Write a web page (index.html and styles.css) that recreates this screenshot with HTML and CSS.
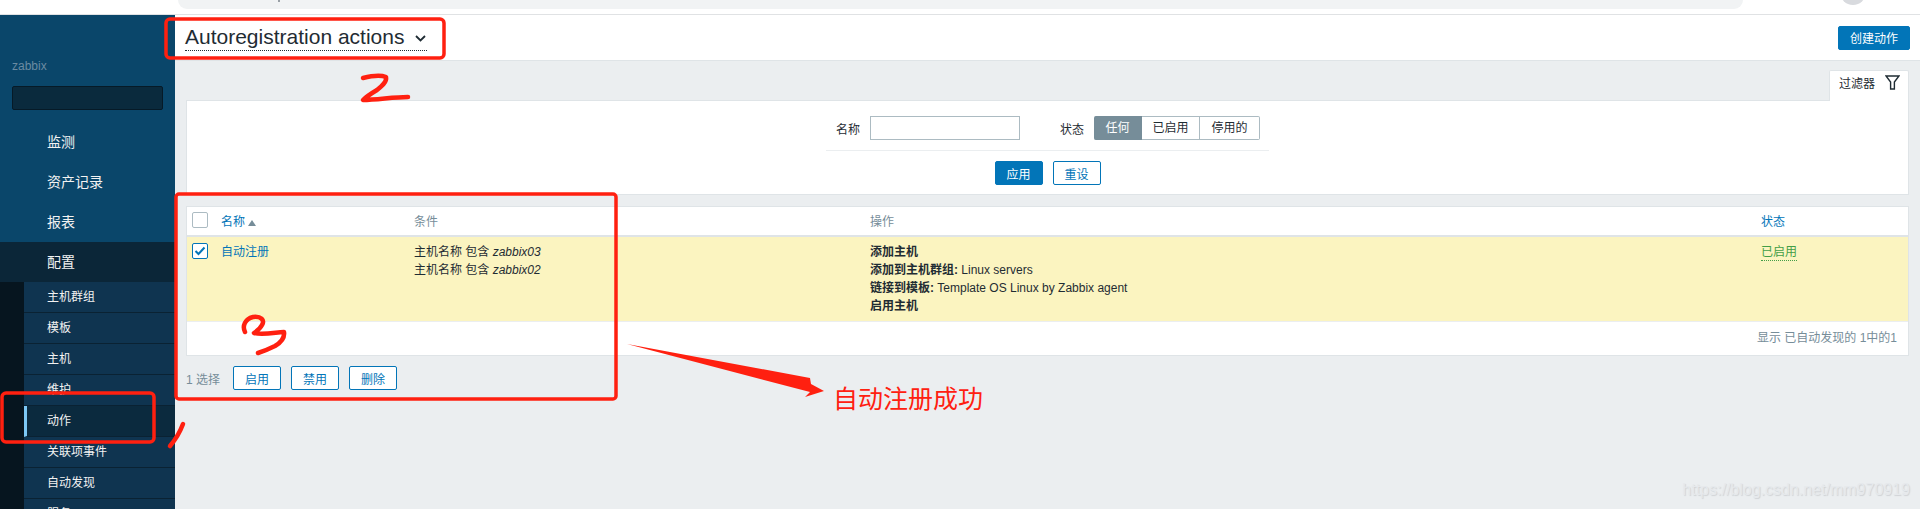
FILE: index.html
```html
<!DOCTYPE html>
<html lang="zh-CN">
  <head>
    <meta charset="UTF-8" />
    <meta name="viewport" content="width=device-width, initial-scale=1.0" />
    <title>Autoregistration actions</title>
    <link rel="stylesheet" href="styles.css">
  </head>
  <body>
    <div class="browser-strip">
      <div class="address-bar"><span class="address-tick"></span></div>
      <div class="avatar"></div>
    </div>

    <div class="app">
      <aside class="sidebar">
        <div class="server-name">zabbix</div>
        <div class="search-box"></div>
        <ul class="menu">
          <li>监测</li>
          <li>资产记录</li>
          <li>报表</li>
          <li class="open">配置</li>
        </ul>
        <ul class="submenu">
          <li>主机群组</li>
          <li>模板</li>
          <li>主机</li>
          <li>维护</li>
          <li class="current">动作</li>
          <li>关联项事件</li>
          <li>自动发现</li>
          <li>服务</li>
        </ul>
      </aside>

      <main class="main">
        <header class="page-head">
          <h1 class="page-title">Autoregistration actions
            <svg class="chevron" width="11" height="7" viewBox="0 0 11 7"><path d="M1 1l4.5 4.5L10 1" fill="none" stroke="#1f2c33" stroke-width="1.8"/></svg>
          </h1>
          <button class="btn btn-solid create-btn">创建动作</button>
        </header>

        <div class="content">
          <div class="filter-tabs">
            <div class="filter-tab">
              <span>过滤器</span>
              <svg width="15" height="15" viewBox="0 0 15 15"><path d="M1 1h13L9.4 7v7H5.6V7z" fill="none" stroke="#1f2c33" stroke-width="1.4"/></svg>
            </div>
          </div>
          <section class="filter">
            <div class="filter-row">
              <label class="filter-label">名称</label>
              <input class="filter-input" type="text" />
              <label class="filter-label status-label">状态</label>
              <div class="segments">
                <span class="segment segment-on">任何</span>
                <span class="segment segment-mid">已启用</span>
                <span class="segment segment-end">停用的</span>
              </div>
            </div>
            <div class="filter-actions">
              <button class="btn btn-solid">应用</button>
              <button class="btn">重设</button>
            </div>
          </section>

          <section class="list">
            <table class="actions-table">
              <colgroup>
                <col class="col-check" />
                <col class="col-name" />
                <col class="col-cond" />
                <col class="col-ops" />
                <col />
              </colgroup>
              <thead>
                <tr>
                  <th><span class="checkbox"></span></th>
                  <th class="sortable">名称<span class="sort-up"></span></th>
                  <th>条件</th>
                  <th>操作</th>
                  <th class="sortable">状态</th>
                </tr>
              </thead>
              <tbody>
                <tr class="selected">
                  <td>
                    <span class="checkbox checked">
                      <svg width="12" height="10" viewBox="0 0 12 10"><path d="M1.5 5l3 3 6-6.5" fill="none" stroke="#0275b8" stroke-width="2"/></svg>
                    </span>
                  </td>
                  <td><a class="link">自动注册</a></td>
                  <td>
                    主机名称 包含 <i>zabbix03</i><br />
                    主机名称 包含 <i>zabbix02</i>
                  </td>
                  <td>
                    <b>添加主机</b><br />
                    <b>添加到主机群组:</b> Linux servers<br />
                    <b>链接到模板:</b> Template OS Linux by Zabbix agent<br />
                    <b>启用主机</b>
                  </td>
                  <td><span class="enabled">已启用</span></td>
                </tr>
              </tbody>
            </table>
            <div class="list-foot">显示 已自动发现的 1中的1</div>
          </section>

          <div class="bulk-bar">
            <span class="bulk-count">1 选择</span>
            <button class="btn">启用</button>
            <button class="btn">禁用</button>
            <button class="btn">删除</button>
          </div>
        </div>
      </main>
    </div>

    <!-- red pen notes drawn on top of the page -->
    <svg class="notes" width="1920" height="509" viewBox="0 0 1920 509">
      <g fill="none" stroke="#ff2010" stroke-width="3.5" stroke-linecap="round" stroke-linejoin="round">
        <rect x="166" y="19" width="278" height="39" rx="4" />
        <rect x="176" y="194" width="440" height="205" rx="3" />
        <rect x="2" y="393" width="152" height="49" rx="4" />
        <g stroke-width="4.5">
          <path d="M363 78c8-2 18-3 23-1 1 5-4 9-9 13-5 3-10 6-14 10 14 0 30-3 45-3" />
          <path d="M245 332c-3-6 0-13 8-15 8-1 12 3 9 8-2 4-5 6-8 8 8 2 18 0 30-1 1 7-4 11-9 14-6 3-11 5-17 7" />
          <path d="M183 424c-3 8-7 15-13 22" />
        </g>
      </g>
      <polygon points="627,344 810,378 811,384 824,391 805,397 810,392" fill="#ff2010" />
    </svg>
    <div class="note-text">自动注册成功</div>
    <div class="watermark">https://blog.csdn.net/mm970919</div>
  </body>
</html>
```

FILE: styles.css
```css
html,
body {
  height: 100%;
  margin: 0;
  overflow: hidden;
}
body {
  display: flex;
  flex-direction: column;
  position: relative;
  font-family: "Liberation Sans", "Noto Sans CJK SC", sans-serif;
  font-size: 12px;
  color: #1f2c33;
  background-color: #ebeef0;
}
ul {
  list-style: none;
  margin: 0;
  padding: 0;
}

.browser-strip {
  display: flex;
  flex: none;
  height: 14px;
  background-color: #fff;
  border-bottom: 1px solid #e0e2e4;
}
.address-bar {
  width: 1565px;
  height: 9px;
  margin-left: 178px;
  background-color: #f1f3f4;
  border-radius: 0 0 14px 14px;
}
.address-tick {
  display: block;
  width: 2px;
  height: 2px;
  margin-left: 100px;
  background-color: #9aa0a6;
}
.avatar {
  width: 26px;
  height: 26px;
  margin: -21px 0 0 97px;
  border-radius: 50%;
  background-color: #d8dade;
}

.app {
  display: flex;
  flex: 1;
  min-height: 0;
}

.sidebar {
  flex: none;
  width: 175px;
  overflow: hidden;
  background-color: #0a466a;
  color: #f2f2f2;
}
.server-name {
  padding: 44px 0 0 12px;
  line-height: 14px;
  color: #6a8ba2;
}
.search-box {
  height: 22px;
  margin: 13px 12px 12px;
  background-color: #0a2a3d;
  border: 1px solid #061a27;
  border-radius: 2px;
}
.menu li {
  height: 40px;
  padding-left: 47px;
  font-size: 14px;
  line-height: 40px;
}
.menu .open {
  background-color: #0b2638;
}
.submenu {
  background-color: #06151f;
  padding-left: 24px;
}
.submenu li {
  height: 30px;
  padding-left: 23px;
  line-height: 30px;
  background-color: #0f3450;
  border-bottom: 1px solid #0a2233;
}
.submenu .current {
  padding-left: 20px;
  background-color: #0b2a3e;
  border-left: 3px solid #7cc8f5;
}

.main {
  display: flex;
  flex: 1;
  flex-direction: column;
  min-width: 0;
}
.page-head {
  display: flex;
  flex: none;
  align-items: center;
  justify-content: space-between;
  height: 45px;
  padding: 0 10px;
  background-color: #fff;
  border-bottom: 1px solid #dfe4e7;
}
.page-title {
  margin: 0;
  padding-bottom: 1px;
  font-size: 21px;
  font-weight: normal;
  line-height: 24px;
  border-bottom: 1px dotted #1f2c33;
}
.chevron {
  margin: 0 1px 2px 5px;
}
.content {
  padding: 9px 11px 0 11px;
}

.btn {
  width: 48px;
  height: 24px;
  padding: 0;
  font-family: inherit;
  font-size: 12px;
  color: #0275b8;
  background-color: #fff;
  border: 1px solid #0275b8;
  border-radius: 2px;
}
.btn-solid {
  color: #fff;
  background-color: #0275b8;
}
.create-btn {
  width: 72px;
}

.filter-tabs {
  display: flex;
  justify-content: flex-end;
}
.filter-tab {
  display: flex;
  align-items: center;
  gap: 10px;
  width: 80px;
  height: 31px;
  box-sizing: border-box;
  padding: 0 8px 7px 9px;
  margin-bottom: -1px;
  white-space: nowrap;
  background-color: #fff;
  border: 1px solid #dfe4e7;
  border-bottom: 0;
  border-radius: 2px 2px 0 0;
  position: relative;
}
.filter {
  height: 95px;
  box-sizing: border-box;
  background-color: #fff;
  border: 1px solid #dfe4e7;
  margin-bottom: 11px;
}
.filter-row {
  display: flex;
  align-items: center;
  width: 443px;
  height: 35px;
  margin: 15px auto 0;
  padding-bottom: 10px;
  box-sizing: border-box;
  border-bottom: 1px solid #ebeef0;
}
.filter-label {
  margin-left: 10px;
  margin-right: 10px;
}
.status-label {
  margin-left: 40px;
}
.filter-input {
  width: 150px;
  height: 24px;
  box-sizing: border-box;
  background-color: #fff;
  border: 1px solid #acbbc2;
  padding: 0;
}
.segments {
  display: flex;
  height: 24px;
}
.segment {
  box-sizing: border-box;
  width: 60px;
  line-height: 22px;
  text-align: center;
  border: 1px solid #acbbc2;
  border-left: 0;
}
.segment-on {
  width: 48px;
  color: #fff;
  background-color: #768d99;
  border-color: #768d99;
  border-radius: 2px 0 0 2px;
}
.segment-mid {
  width: 58px;
}
.segment-end {
  border-radius: 0 2px 2px 0;
}
.filter-actions {
  display: flex;
  justify-content: center;
  gap: 10px;
  margin-top: 10px;
}

.list {
  background-color: #fff;
  border: 1px solid #dfe4e7;
}
.actions-table {
  width: 100%;
  table-layout: fixed;
  border-collapse: collapse;
}
.col-check {
  width: 29px;
}
.col-name {
  width: 193px;
}
.col-cond {
  width: 456px;
}
.col-ops {
  width: 891px;
}
.actions-table th {
  height: 26px;
  padding: 0 5px 2px;
  font-weight: normal;
  text-align: left;
  color: #768d99;
  border-bottom: 2px solid #dfe4e7;
}
.actions-table .sortable {
  color: #0275b8;
}
.actions-table td {
  height: 73px;
  padding: 6px 5px 5px;
  line-height: 18px;
  vertical-align: top;
  background-color: #fbf4c0;
  border-bottom: 1px solid #ebeef0;
}
.sort-up {
  display: inline-block;
  margin-left: 3px;
  border: 4px solid transparent;
  border-top: 0;
  border-bottom: 6px solid #768d99;
}
.checkbox {
  display: flex;
  align-items: center;
  justify-content: center;
  width: 16px;
  height: 16px;
  box-sizing: border-box;
  background-color: #fff;
  border: 1px solid #acbbc2;
  border-radius: 2px;
}
.checked {
  border-color: #0275b8;
}
.link {
  color: #0275b8;
}
.enabled {
  display: inline-block;
  line-height: 15px;
  color: #429e47;
  border-bottom: 1px dotted #429e47;
}
.list-foot {
  height: 33px;
  padding-right: 11px;
  line-height: 33px;
  text-align: right;
  color: #768d99;
}
.bulk-bar {
  display: flex;
  align-items: center;
  gap: 10px;
  margin-top: 10px;
}
.bulk-count {
  width: 37px;
  color: #768d99;
}

.notes {
  position: absolute;
  top: 0;
  left: 0;
  pointer-events: none;
}
.note-text {
  position: absolute;
  top: 383px;
  left: 833px;
  font-size: 25px;
  line-height: 32px;
  color: #ff2010;
}
.watermark {
  position: absolute;
  top: 479px;
  right: 10px;
  font-size: 16px;
  line-height: 22px;
  color: #e6e9ec;
  text-shadow: 1px 1px 1px #cfd2d5;
}
```
